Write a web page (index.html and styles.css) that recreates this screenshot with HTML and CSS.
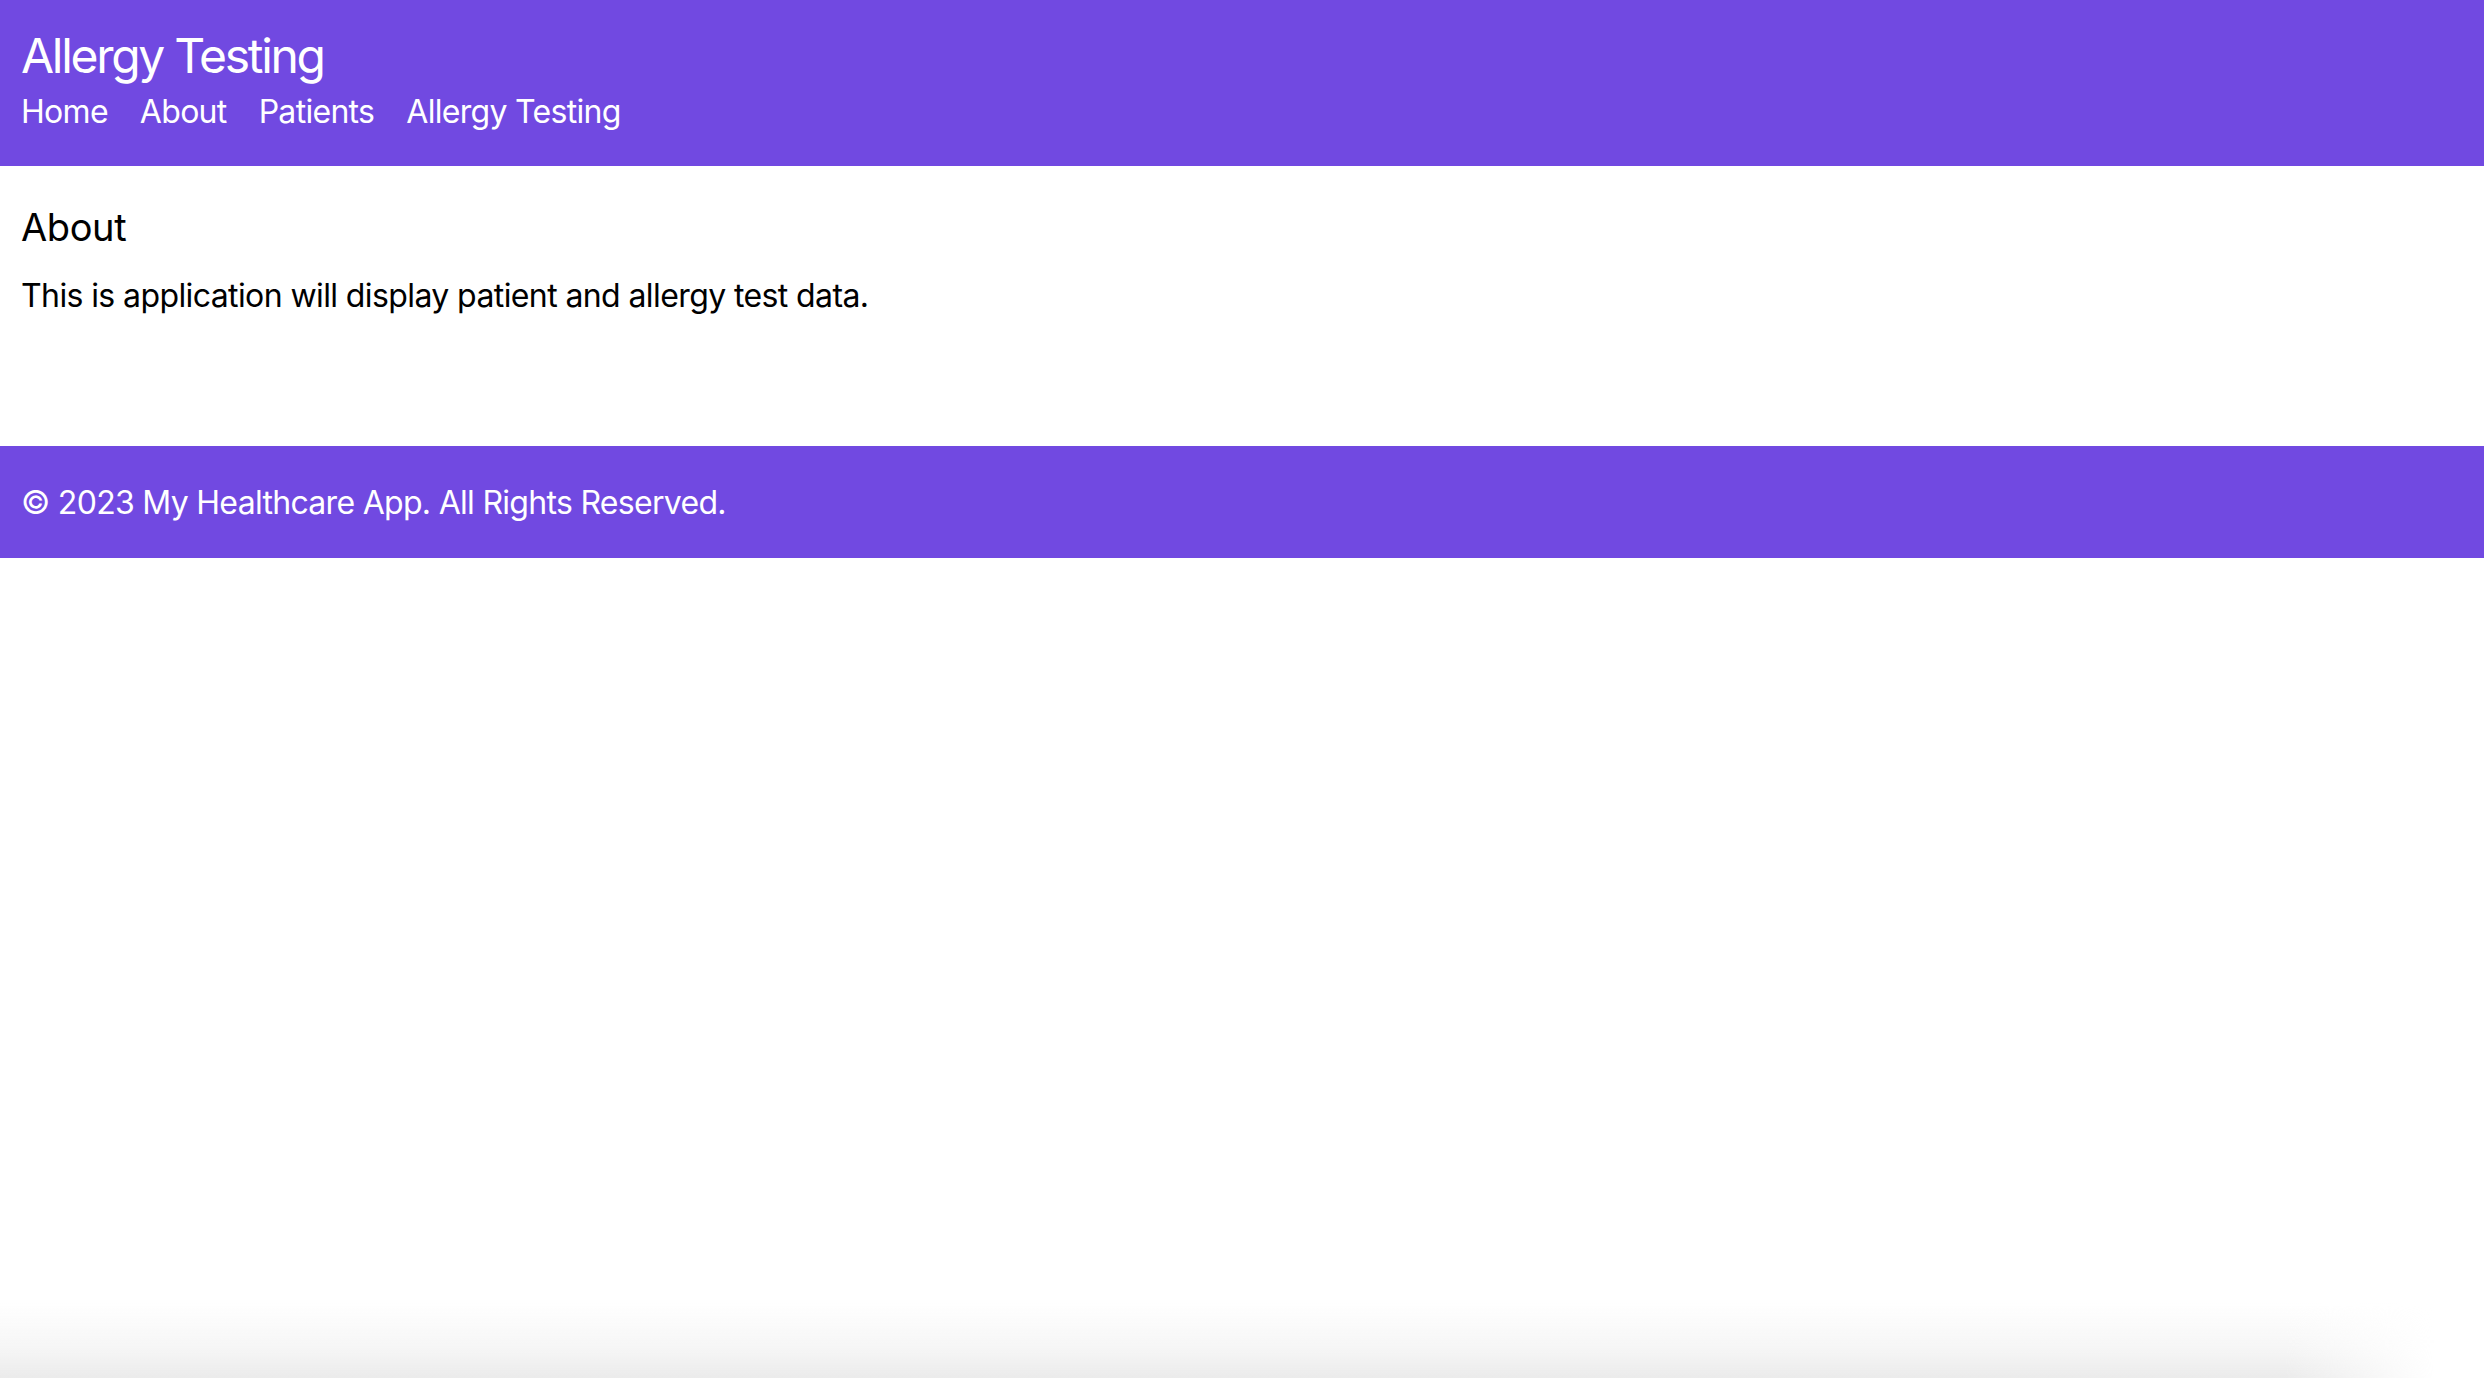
FILE: index.html
```html
<!DOCTYPE html>
<html lang="en">
<head>
<meta charset="utf-8">
<title>Allergy Testing</title>
<link rel="stylesheet" href="styles.css">
</head>
<body>
<header class="site-header">
  <h1 class="site-title">Allergy Testing</h1>
  <nav class="site-nav">
    <a class="nav-link" href="#">Home</a>
    <a class="nav-link" href="#">About</a>
    <a class="nav-link" href="#">Patients</a>
    <a class="nav-link" href="#">Allergy Testing</a>
  </nav>
</header>
<main class="content">
  <h2 class="page-title">About</h2>
  <p class="page-text">This is application will display patient and allergy test data.</p>
</main>
<footer class="site-footer">
  <p class="footer-text">© 2023 My Healthcare App. All Rights Reserved.</p>
</footer>
<div class="window-shadow"></div>
</body>
</html>
```

FILE: styles.css
```css
html, body {
  margin: 0;
  padding: 0;
  background: #ffffff;
}

body {
  font-family: Inter, "Noto Sans", "Liberation Sans", sans-serif;
  color: #000000;
  min-height: 1378px;
}

.site-header {
  background: #7149e1;
  color: #ffffff;
  padding: 27px 21px 35px;
}

.site-title {
  margin: 0;
  font-size: 48px;
  line-height: 58px;
  font-weight: 400;
  letter-spacing: -2.3px;
}

.site-nav {
  display: flex;
  gap: 32px;
  margin-top: 8px;
}

.nav-link {
  color: #ffffff;
  text-decoration: none;
  font-size: 32px;
  line-height: 38px;
  letter-spacing: -0.7px;
}

.content {
  padding: 38px 21px 131px;
}

.page-title {
  margin: 0 0 27px;
  font-size: 38px;
  line-height: 46px;
  font-weight: 400;
  letter-spacing: -0.4px;
}

.page-text {
  margin: 0;
  font-size: 32px;
  line-height: 38px;
  letter-spacing: -0.6px;
}

.site-footer {
  background: #7149e1;
  color: #ffffff;
  padding: 38px 21px 36px;
}

.footer-text {
  margin: 0;
  font-size: 32px;
  line-height: 38px;
  letter-spacing: -0.7px;
}

.window-shadow {
  position: fixed;
  left: 0;
  right: 0;
  bottom: 0;
  height: 75px;
  pointer-events: none;
  background: linear-gradient(to bottom, rgba(235, 235, 235, 0) 0%, rgba(240, 240, 240, 0.6) 60%, #ebebeb 100%);
  -webkit-mask-image: linear-gradient(to right, #000 0%, #000 92%, transparent 98%);
  mask-image: linear-gradient(to right, #000 0%, #000 92%, transparent 98%);
}
```
